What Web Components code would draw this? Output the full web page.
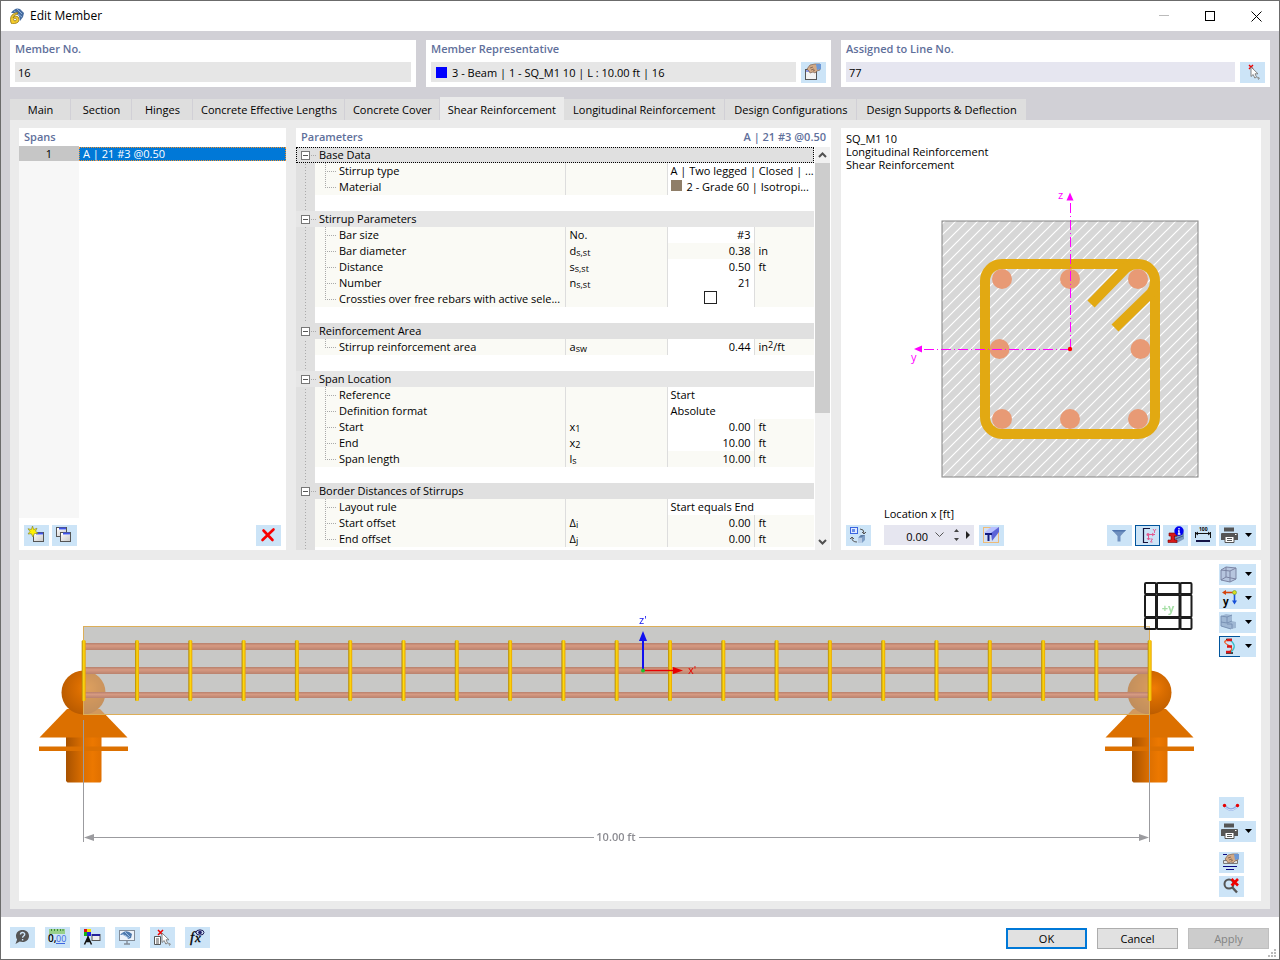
<!DOCTYPE html>
<html lang="en">
<head>
<meta charset="utf-8">
<title>Edit Member</title>
<style>
html, body { margin: 0; height: 100%; }
body { font: 11px/16px "Open Sans", "Noto Sans", sans-serif; color: #000; background: #fff; }
</style>
</head>
<body>
<rf-window></rf-window>
<script>
const BASE = `
:host { box-sizing: border-box; display: block; }
*, *::before, *::after { box-sizing: border-box; }
button, input { font: inherit; color: inherit; margin: 0; border-radius: 0; }
svg { display: block; }
`;

function define(name, render) {
  customElements.define(name, class extends HTMLElement {
    constructor() {
      super();
      this.attachShadow({ mode: 'open' });
    }
    connectedCallback() {
      this.shadowRoot.innerHTML = render(this);
    }
  });
}

/* ---------- icons, drawn on a 25 x 21 field ---------- */
const HAND = `<path d="M6 7l3-4 5-1 5 0v6l-3 1-2 2-2-1-3 1-1-2z" fill="#d3aa86" stroke="#7d6353" stroke-width=".7"/><path d="M9 6l3-1M10 8l3-1M12 9l2-1" stroke="#6d5548" stroke-width=".7"/><path d="M15 2l5 0v5l-4 1z" fill="#6c98d6"/>`;
const PRINTER = `<path d="M7 2.500h10v4H7z" fill="#555"/><path d="M5 8h15q1 0 1 1v6H4V9q0-1 1-1z" fill="#555"/><path d="M8 11.500h9v6H8z" fill="#fff" stroke="#555"/><path d="M10 13.500h5M10 15.500h5" stroke="#555"/><path d="M18 9.500h1.500" stroke="#fff"/>`;
const WIN = (x, y) => `<rect x="${x + .5}" y="${y + .5}" width="10" height="9" fill="url(#wg)" stroke="#555"/><path d="M${x + 1} ${y + 2}h9" stroke="#fff" stroke-width="2"/><path d="M${x + 3} ${y + 1.5}h7" stroke="#3f55e8" stroke-width="2"/>`;
const CURSOR = (x, y) => `<g transform="translate(${x} ${y})"><path d="M0 0v9.500l2.200-2 1.600 3.500 1.800-.8L4 6.800h3z" fill="#fff" stroke="#777" stroke-width=".9"/><path d="M6.500 10l2 1-1 1.500z" fill="#bbb" stroke="#777" stroke-width=".6"/></g>`;
const REDX = (x, y, s, w) => `<path d="M${x} ${y}l${s} ${s}m0-${s}l-${s} ${s}" stroke="#f00000" stroke-width="${w}" fill="none"/>`;
const ICONS = {
  pick: `<rect x="4.500" y="7.500" width="11" height="10" fill="#f2f2f2" stroke="#555"/><path d="M5 9h10" stroke="#6b7ae0" stroke-width="1.500"/>${HAND}`,
  select: `${REDX(9, 3, 4, 1.4)}${CURSOR(11, 5)}`,
  new: `${WIN(9, 7)}<path d="M8.500 1l1.200 3.600 3.300-1.400-1.500 3 2.500 2.200-3.600.2L9 12 7.300 8.700 4 9l2-2.600L4 3.700l3.400.8z" fill="#fff200" stroke="#8b8b30" stroke-width=".7"/>`,
  copy: `${WIN(4, 2)}${WIN(8, 7)}`,
  delete: `<path d="M7.500 5.500l9 9.500m1-10.500l-11 10.500" stroke="#f80000" stroke-width="2.600" stroke-linecap="round"/>`,
  swap: `<rect x="4.500" y="2.500" width="7" height="6" fill="#dfeaff" stroke="#3a66e0"/><path d="M6 4h3v3H6z" fill="#3a66e0" opacity=".7"/><path d="M14 4q4 0 4 4m-2-1l2 2 2-2M11 17q-5 0-5-4m-2 1l2-2 2 2" fill="none" stroke="#555"/><path d="M12 13l3-3h4v5l-3 3h-4z" fill="#7f9fc6"/><path d="M12 13h4v5h-4z" fill="#b9cde6"/><path d="M13 12l2-2h4l-3 2z" fill="#5f7fa8"/>`,
  tview: `<rect x="4.500" y="2.500" width="15" height="15" fill="#d5e0f2" stroke="#eebb77"/><path d="M5 8l7-6h8l-7 6z" fill="#b8c0ff"/><path d="M12 8l8-6v5l-7 9z" fill="#5b63d8"/><path d="M6 9h7M9.500 9v7" stroke="#111a80" stroke-width="2"/>`,
  filter: `<path d="M5 5h14l-5.500 6v5.500h-3V11z" fill="#6f90bf"/><path d="M5 5h14l-1.500 1.500h-11z" fill="#4f74ad"/>`,
  axes: `<path d="M15 3.500H8.500v14H13" fill="none" stroke="#14143c" stroke-width="1.200"/><path d="M13.500 15V9.500H20" stroke="#e2588f" fill="none"/><circle cx="13" cy="9.500" r="1.500" fill="#e2588f"/><path d="M18 4l1.500 2L21 4m-1.500 2v2M17 8l2 1.500-2 1.500M12 13l1.500 2 1.500-2M15.500 14h2l-2 3h2" fill="none" stroke="#e2588f" stroke-width=".9"/>`,
  info: `<path d="M11 8l8-2 2 2v6l-7 4-3-1z" fill="#7a97bd"/><path d="M10 12l10-3M10 15l10-4" stroke="#3f5c87"/><path d="M6 8h8v3h-2.500v4H14v2.500H5V15h3v-4H6z" fill="#d81818" stroke="#700" stroke-width=".6"/><circle cx="16" cy="6" r="4.700" fill="#0000f0"/><path d="M16 3v1.500M15 5.800h1v3.200m-1.200 0h2.600" stroke="#fff" stroke-width="1.300"/>`,
  dim: `<path d="M5 8.500h14M4.500 7v6M19.500 7v6M7 7l-2 1.500L7 10M17 7l2 1.500L17 10" fill="none" stroke="#111"/><path d="M5 16h14" stroke="#141446" stroke-width="2"/><text x="8" y="6" font-size="5" font-weight="700">100</text>`,
  print: PRINTER,
  cube: `<path d="M4 6l5-3 10 1v11l-6 3-9-2z" fill="#b6c5de"/><path d="M4 6l5-3 10 1v11l-6 3-9-2zM4 6l9 1v11M13 7l6-3M9 3v10l-5 3M9 13l10 2" fill="none" stroke="#7b84a3"/>`,
  yview: `<path d="M17 4.500H7" stroke="#d4430d" stroke-width="1.600"/><path d="M5 4.500L9 2v5z" fill="#d4430d"/><path d="M17.500 5v9" stroke="#1850d8" stroke-width="1.600"/><path d="M17.500 16.500L15 12.500h5z" fill="#1850d8"/><circle cx="17.500" cy="4.500" r="2" fill="#d9dc20" stroke="#69a030" stroke-width=".6"/><text x="6" y="17" font-size="10" font-weight="700">y</text>`,
  solids: `<path d="M4 4l5-2 6 1v6l4 1v6l-6 1-9-3z" fill="#9fb7d3"/><path d="M4 4l6 1v6l-6-1zM10 11l5-2M10 12h5v5M4 10v4l10 3M10 5l5-2" fill="none" stroke="#758db0" stroke-width=".9"/>`,
  results: `<path d="M9 3.500h6M9 17h7" stroke="#111" stroke-width="1.500"/><path d="M12 4q-8 1-1 5t1 7" fill="none" stroke="#f05a28" stroke-width="1.300"/><path d="M13 4q8 6 1 12" fill="none" stroke="#35bcc8" stroke-width="1.200"/><path d="M10 4h5M10 10.500h5M9 16h5" stroke="#d81818" stroke-width="2.400"/>`,
  deform: `<path d="M5 8q7 9 14 0" fill="none" stroke="#8ba8e4" stroke-width="2.600"/><path d="M6 10q6 6 12 0" fill="none" stroke="#d8e4f8"/><circle cx="5.500" cy="8.500" r="1.700" fill="#e80000"/><circle cx="18.500" cy="8.500" r="1.700" fill="#e80000"/>`,
  settings: `<path d="M4 2.500h4M16 2.500h3M4 14.500h14M7 17.500h8" stroke="#0a0a82"/><path d="M4.500 8.500h14v3h-14z" fill="#e2e2e2" stroke="#777"/>${HAND}`,
  zoomx: `<circle cx="10" cy="8" r="4.500" fill="none" stroke="#555" stroke-width="2"/><path d="M13 11l5 5.500" stroke="#555" stroke-width="2.400"/>${REDX(12.500, 3, 6.5, 2.6)}`,
  help: `<path d="M12.500 3c4 0 6.500 2.600 6.500 6s-2.600 6-6.500 6c-1 0-2-.2-2.800-.5L5.500 17l1.600-4.500C6.400 11.500 6 10.400 6 9c0-3.400 2.500-6 6.500-6z" fill="#555"/><path d="M10.500 7.500c0-2.600 4.200-2.500 4.200-.2 0 1.700-2.100 1.600-2.100 3.400M12.600 12v1.400" fill="none" stroke="#cce4f7" stroke-width="1.400"/>`,
  units: `<path d="M4 2h16v5H4z" fill="#98d08b"/><path d="M6.500 2v2M9.500 2v2M12.500 2v2M15.500 2v2M18 2v2" stroke="#3e8c38"/><text x="3" y="15" font-size="10" font-weight="600">0,</text><text x="11" y="15" font-size="9" fill="#3a66e0">00</text><path d="M11 16.500h9" stroke="#3a66e0"/>`,
  colors: `<path d="M4 2h3v3H4z" fill="#e01010"/><path d="M7 2h4v3H7z" fill="#f2e200"/><path d="M4 5h3v4H4z" fill="#17b517"/><path d="M7 5h4v4H7z" fill="#2020e0"/><path d="M4.500 17.500L8 10l3.500 7.500M6 14.500h4M8 9v5" fill="none" stroke="#111" stroke-width="1.500"/><rect x="12" y="7.500" width="8" height="6" fill="#eee" stroke="#555"/><path d="M12 8h8" stroke="#23239a" stroke-width="2"/>`,
  display: `<rect x="4.500" y="3.500" width="15" height="10" fill="#edf3fa" stroke="#828c98"/><path d="M5 8q6-7 12-1l-1 4-3 1q-1-5-8-4z" fill="#4d79ad"/><path d="M7 7l7 4M10 5l5 5" stroke="#9bbbe0"/><path d="M12 14v3M9 17h6" stroke="#828c98" stroke-width="1.400"/>`,
  formulas: `<text x="5" y="15" font-size="15" font-style="italic" font-family="Liberation Serif, serif" stroke="#000" stroke-width=".3">f</text><text x="10" y="15" font-size="13" font-style="italic" font-family="Liberation Serif, serif" stroke="#000" stroke-width=".3">x</text><ellipse cx="15" cy="5.500" rx="4" ry="2.600" fill="#c9d8f0" stroke="#20205a"/><circle cx="15" cy="5.500" r="1.800" fill="#20206a"/>`,
  pickdoc: `<path d="M4.500 9.500h6v8h-6z" fill="#fff" stroke="#555"/><path d="M6 12h3M6 14h3M6 16h3" stroke="#555"/>${REDX(8, 3, 5, 1.5)}${CURSOR(12, 6)}`
};

define('rf-tool', el => `<style>${BASE}
:host { flex: none; }
button { display: flex; align-items: center; width: 25px; height: 21px; padding: 0; border: 0; background: #cce4f7; }
button.menu { width: 37px; }
:host([active]) button:not(.menu) { box-shadow: inset 0 0 0 1px #00549c; }
:host([active]) button.menu { background: linear-gradient(#00549c, #00549c) 0 0 / 21px 1px no-repeat, linear-gradient(#00549c, #00549c) 0 100% / 21px 1px no-repeat, linear-gradient(#00549c, #00549c) 0 0 / 1px 100% no-repeat, #cce4f7; }
svg { flex: none; font-family: "Open Sans", sans-serif; }
svg.caret { margin-left: 2px; }
.menu .glyph { margin-left: -2px; }
</style>
<button type="button" aria-label="${el.getAttribute('label')}"${el.hasAttribute('menu') ? ' class="menu"' : ''}>
<svg class="glyph" width="25" height="21" viewBox="0 0 25 21"><defs><linearGradient id="wg" x2="1" y2="1"><stop stop-color="#fff"/><stop offset="1" stop-color="#c8c8c8"/></linearGradient></defs>${ICONS[el.getAttribute('icon')]}</svg>
${el.hasAttribute('menu') ? '<svg class="caret" width="9" height="5" viewBox="0 0 9 5"><path d="M1 0h7L4.500 4z"/></svg>' : ''}
</button>`);

/* ---------- title bar ---------- */
define('rf-titlebar', () => `<style>${BASE}
:host { display: flex; align-items: center; height: 30px; padding-left: 8px; background: #fff; font-size: 12px; }
h1 { margin: 0; padding-left: 5px; flex: 1; font: inherit; }
button { width: 46px; height: 30px; padding: 0; border: 0; background: none; display: grid; place-items: center; }
</style>
<svg width="16" height="16" viewBox="0 0 16 16"><path d="M2 5q4-6 9-4l4 4-1 4-3 4-1-5-4-3z" fill="#456b9f"/><path d="M5 3l8 6M8 1l5 5" stroke="#8eb0da"/><path d="M8.500 4.500q-7 1-7 7t4 4q4.500-.5 4.500-4T6.500 8Q5 8 4 10q1-4 4.500-4z" fill="#f4cb2c" stroke="#927414" stroke-width=".8"/><circle cx="6" cy="11.500" r="1.400" fill="#fff" stroke="#927414" stroke-width=".8"/></svg>
<h1>Edit Member</h1>
<button aria-label="Minimize"><svg width="10" height="10"><path d="M0 4.500h10" stroke="#bbb"/></svg></button>
<button aria-label="Maximize"><svg width="11" height="11"><rect x=".5" y=".5" width="9" height="9" fill="none" stroke="#000"/></svg></button>
<button aria-label="Close"><svg width="11" height="11"><path d="M.5.500l10 10m0-10l-10 10" stroke="#000"/></svg></button>`);

/* ---------- labelled read-only field ---------- */
define('rf-field', el => `<style>${BASE}
:host { background: #fff; padding: 1px 5px 4px; height: 47px; min-width: 0; }
label { display: block; height: 21px; line-height: 16px; font-weight: 600; color: #5f709b; }
.row { display: flex; gap: 5px; align-items: start; }
.box { flex: 1; min-width: 0; display: flex; align-items: center; height: 20px; padding: 0 3px; background: ${el.getAttribute('tint') || '#e6e6e6'}; }
.swatch { width: 11px; height: 11px; margin: 0 5px 0 2px; background: #00f; }
input { flex: 1; min-width: 0; height: 20px; padding: 0; border: 0; background: none; outline: 0; }
</style>
<label for="v">${el.getAttribute('label')}</label>
<div class="row"><div class="box">${el.hasAttribute('swatch') ? '<span class="swatch"></span>' : ''}<input id="v" readonly value="${el.getAttribute('value')}"></div><slot></slot></div>`);

/* ---------- tab strip ---------- */
const TABS = ['Main', 'Section', 'Hinges', 'Concrete Effective Lengths', 'Concrete Cover', 'Shear Reinforcement', 'Longitudinal Reinforcement', 'Design Configurations', 'Design Supports &amp; Deflection'];
define('rf-tabs', () => `<style>${BASE}
:host { display: flex; align-items: end; height: 23px; }
button { min-width: 61px; height: 21px; padding: 1px 7px 0 8px; border: 0; border-right: 1px solid #d1d0d6; background: #dedede; white-space: nowrap; }
button:nth-child(n+8) { padding: 1px 9px 0; }
button[aria-selected=true] { height: 23px; padding: 3px 8px 0; border: 0; background: #ebebeb; }
</style>${TABS.map((t, i) => `<button role="tab" aria-selected="${i === 5}">${t}</button>`).join('')}`);

/* ---------- spans list ---------- */
define('rf-spans', () => `<style>${BASE}
:host { display: flex; flex-direction: column; background: #fff; min-width: 0; }
h2 { margin: 0; padding: 1px 5px; height: 18px; font: inherit; font-weight: 600; color: #5f709b; }
.list { flex: 1; background: linear-gradient(#f7f7f7, #f7f7f7) 0 0 / 60px 100% no-repeat; }
table { width: 100%; border-collapse: collapse; table-layout: fixed; }
th { width: 60px; height: 15px; padding: 0; background: #c6c6c6; font-weight: 400; line-height: 15px; }
td { padding: 1px 0 0; line-height: 14px; }
td div { height: 14px; padding-left: 4px; background: #0078d7; color: #fff; outline: 1px dotted #f0902a; outline-offset: -1px; line-height: 14px; }
footer { display: flex; gap: 3px; padding: 7px 5px 4px; }
.gap { flex: 1; }
</style>
<h2>Spans</h2>
<div class="list"><table><tr><th scope="row">1</th><td><div>A | 21 #3 @0.50</div></td></tr></table></div>
<footer><rf-tool icon="new" label="New"></rf-tool><rf-tool icon="copy" label="Copy"></rf-tool><span class="gap"></span><rf-tool icon="delete" label="Delete"></rf-tool></footer>`);

/* ---------- parameter grid ---------- */
const GROUPS = [
  ['Base Data', [
    ['Stirrup type', '', { wide: 'A | Two legged | Closed | ...' }],
    ['Material', '', { wide: '<i class="swatch"></i>2 - Grade 60 | Isotropi...' }]]],
  ['Stirrup Parameters', [
    ['Bar size', 'No.', { v: '#3', u: '' }],
    ['Bar diameter', 'd<sub>s,st</sub>', { v: '0.38', u: 'in', ro: 1 }],
    ['Distance', 's<sub>s,st</sub>', { v: '0.50', u: 'ft' }],
    ['Number', 'n<sub>s,st</sub>', { v: '21', u: '' }],
    ['Crossties over free rebars with active sele...', '', { check: 1, u: '' }]]],
  ['Reinforcement Area', [
    ['Stirrup reinforcement area', 'a<sub>sw</sub>', { v: '0.44', u: 'in<sup>2</sup>/ft' }]]],
  ['Span Location', [
    ['Reference', '', { wide: 'Start' }],
    ['Definition format', '', { wide: 'Absolute' }],
    ['Start', 'x<sub>1</sub>', { v: '0.00', u: 'ft' }],
    ['End', 'x<sub>2</sub>', { v: '10.00', u: 'ft' }],
    ['Span length', 'l<sub>s</sub>', { v: '10.00', u: 'ft', ro: 1 }]]],
  ['Border Distances of Stirrups', [
    ['Layout rule', '', { wide: 'Start equals End' }],
    ['Start offset', 'Δ<sub>i</sub>', { v: '0.00', u: 'ft', ro: 1 }],
    ['End offset', 'Δ<sub>j</sub>', { v: '0.00', u: 'ft', ro: 1 }]]]
];
function valueCells(c) {
  if (c.wide) return `<td class="wide" colspan="2">${c.wide}</td>`;
  const inner = c.check ? '<input type="checkbox" aria-label="Crossties over free rebars">' : c.v;
  return `<td class="${c.ro ? 'val ro' : 'val'}${c.check ? ' check' : ''}">${inner}</td><td class="unit">${c.u}</td>`;
}
define('rf-params', () => `<style>${BASE}
:host { display: flex; flex-direction: column; background: #fff; min-width: 0; }
header { display: flex; justify-content: space-between; height: 19px; padding: 1px 5px; font-weight: 600; color: #5f709b; }
h2 { margin: 0; font: inherit; }
.body { flex: 1; display: flex; overflow: hidden; background: linear-gradient(#e0e0e0, #e0e0e0) 0 0 / 19px 100% no-repeat; }
.grid { flex: 1; min-width: 0; position: relative; background: repeating-linear-gradient(#aaa 0 1px, transparent 1px 3px) 9px 8px / 1px 100% no-repeat; }
table { width: 100%; border-collapse: collapse; table-layout: fixed; }
td, th { height: 16px; padding: 0; line-height: 16px; white-space: nowrap; overflow: hidden; font-weight: 400; text-align: left; background: #fafaf5; }
td.gut { background: none; padding-left: 5px; overflow: visible; }
tr.group th, tr.group .gut { background: #e0e0e0; }
tr.group.alt th, tr.group.alt .gut { background: #e6e6e6; }
tr.group th { padding-left: 4px; }
tr.first { outline: 1px dotted #000; outline-offset: -1px; }
.gut button { position: relative; display: block; width: 9px; height: 9px; padding: 0; border: 1px solid #777; background: linear-gradient(#555, #555) 50% 50% / 5px 1px no-repeat #fff; }
.gut button::after { content: ""; position: absolute; left: 9px; top: 3px; width: 5px; height: 1px; background: repeating-linear-gradient(90deg, #aaa 0 1px, transparent 1px 2px); }
tr.space td { background: #fff; }
tr.space td.gut { background: none; }
th.name { padding-left: 24px; border-right: 1px solid #ddd; background:
  repeating-linear-gradient(90deg, #aaa 0 1px, transparent 1px 2px) 10px 8px / 12px 1px no-repeat,
  repeating-linear-gradient(#aaa 0 1px, transparent 1px 2px) 10px 0 / 1px 16px no-repeat, #fafaf5; }
tr.last th.name { background-size: 12px 1px, 1px 8px, auto; }
td.sym { padding-left: 4px; border-right: 1px solid #ddd; }
td.wide { padding-left: 3px; background: #fff; }
td.val { padding-right: 3px; border-right: 1px solid #ddd; background: #fff; text-align: right; }
td.val.ro { background: #fafaf5; }
td.val.check { padding: 0; vertical-align: top; }
td.unit { padding-left: 4px; }
input { appearance: none; display: block; width: 13px; height: 13px; margin: 0 auto; border: 1px solid #222; background: #fff; }
sub, sup { font-size: 9px; line-height: 0; vertical-align: -1px; }
sup { vertical-align: 3px; }
.swatch { display: inline-block; width: 11px; height: 11px; margin-right: 5px; background: #8f7e68; }
.scroll { display: flex; flex-direction: column; width: 15px; margin: 0 1px; background: #f0f0f0; }
.scroll button { flex: none; height: 16px; width: 15px; padding: 0; border: 0; background: none; display: grid; place-items: center; }
.thumb { height: 250px; background: #cdcdcd; }
.rest { flex: 1; }
</style>
<header><h2>Parameters</h2><span>A | 21 #3 @0.50</span></header>
<div class="body"><div class="grid"><table>
<colgroup><col style="width:19px"><col><col style="width:102px"><col style="width:87px"><col style="width:60px"></colgroup>
${GROUPS.map(([g, rows], gi) => `
<tr class="group${gi % 2 ? ' alt' : ''}${gi ? '' : ' first'}"><td class="gut"><button type="button" aria-label="Collapse ${g}"></button></td><th colspan="4">${g}</th></tr>
${rows.map(([n, s, c], i) => `<tr${i === rows.length - 1 ? ' class="last"' : ''}><td class="gut"></td><th class="name" scope="row">${n}</th><td class="sym">${s}</td>${valueCells(c)}</tr>`).join('')}
${gi < GROUPS.length - 1 ? '<tr class="space"><td class="gut"></td><td colspan="4"></td></tr>' : ''}`).join('')}
</table></div>
<div class="scroll"><button type="button" aria-label="Scroll up"><svg width="9" height="6"><path d="M1 5l3.500-3.500L8 5" fill="none" stroke="#505050" stroke-width="2"/></svg></button><div class="thumb"></div><div class="rest"></div><button type="button" aria-label="Scroll down"><svg width="9" height="6"><path d="M1 1l3.500 3.500L8 1" fill="none" stroke="#505050" stroke-width="2"/></svg></button></div>
</div>`);

/* ---------- cross-section preview ---------- */
const BARS = [[1002, 279], [1070, 279], [1138, 279], [999.5, 349], [1140.5, 349], [1002, 419], [1070, 419], [1138, 419]];
define('rf-section', () => `<style>${BASE}
:host { display: flex; flex-direction: column; background: #fff; min-width: 0; padding: 4px 5px; }
p { margin: 0; line-height: 13px; }
.drawing { flex: 1; width: 100%; min-height: 0; margin-top: 9px; }
footer { display: flex; align-items: end; gap: 3px; }
.loc { display: flex; flex-direction: column; gap: 4px; width: 90px; margin: 0 2px 0 10px; }
.loc label { line-height: 14px; white-space: nowrap; }
.spin { display: flex; align-items: center; height: 20px; margin-bottom: 1px; background: #e6e6f0; }
.spin input { width: 44px; height: 20px; padding: 2px 0 0; border: 0; background: none; text-align: right; outline: 0; }
.spin button { padding: 0; border: 0; background: none; display: grid; place-items: center; height: 20px; }
.gap { flex: 1; }
</style>
<p>SQ_M1 10</p><p>Longitudinal Reinforcement</p><p>Shear Reinforcement</p>
<svg class="drawing" viewBox="846 180 410 327">
<defs><pattern id="h" width="11" height="11" patternUnits="userSpaceOnUse"><path d="M-1 12L12-1M-1 1L1-1M10 12l2-2" stroke="#fff" stroke-width="1.200"/></pattern>
<g id="bars">${BARS.map(([x, y]) => `<circle cx="${x}" cy="${y}" r="10"/>`).join('')}</g></defs>
<rect x="942" y="221" width="256" height="256" fill="#d7d7d7"/>
<rect x="942" y="221" width="256" height="256" fill="url(#h)" stroke="#848484"/>
<use href="#bars" fill="#e89a75"/>
<g fill="none" stroke="#e2a912" stroke-width="10">
<rect x="985" y="264" width="170" height="170" rx="17"/>
<path d="M1091 304l35-36q5-4 12-4M1115 328l36-35q4-5 4-12"/></g>
<g stroke="#f0f" fill="none" stroke-dasharray="10 3 1 3"><path d="M1070.500 349V200"/><path d="M1070 349.500H921"/></g>
<path d="M1070 192.500l3.500 8h-7zM914 349l8-3.500v7z" fill="#f0f"/>
<circle cx="1070" cy="349" r="2.200" fill="#f00"/>
<g fill="#f0f" font-size="11"><text x="1058" y="199">z</text><text x="911" y="361">y</text></g>
</svg>
<footer>
<rf-tool icon="swap" label="Swap view"></rf-tool>
<div class="loc"><label for="x">Location x [ft]</label><div class="spin"><input id="x" value="0.00">
<button type="button" aria-label="Values" style="width:22px"><svg width="9" height="6"><path d="M.5.500l4 4 4-4" fill="none" stroke="#555"/></svg></button>
<button type="button" aria-label="Step" style="width:12px"><svg width="5" height="12"><path d="M0 3l2.500-3L5 3zM0 9l2.500 3L5 9z" fill="#444"/></svg></button>
<button type="button" aria-label="Next" style="width:12px"><svg width="4" height="8"><path d="M0 0l4 4-4 4z" fill="#222"/></svg></button></div></div>
<rf-tool icon="tview" label="Section view"></rf-tool><span class="gap"></span>
<rf-tool icon="filter" label="Filter"></rf-tool><rf-tool icon="axes" label="Axes" active></rf-tool><rf-tool icon="info" label="Section info"></rf-tool><rf-tool icon="dim" label="Dimensions"></rf-tool><rf-tool icon="print" label="Print" menu></rf-tool>
</footer>`);

/* ---------- 3D scene ---------- */
const STIRRUPS = Array.from({ length: 21 }, (_, i) => 83.7 + i * 53.3);
const NAV = [[1145, 11], [1157, 22.5], [1180.5, 11]].flatMap(([x, w]) => [[583, 11], [595, 22], [618, 11]].map(([y, h]) => `<rect x="${x}" y="${y}" width="${w}" height="${h}" rx="1"/>`)).join('');
define('rf-scene', () => `<style>${BASE}
:host { display: flex; background: #fff; min-height: 0; padding-right: 5px; }
.view { flex: 1; min-width: 0; width: 100%; height: 100%; }
aside { display: flex; flex-direction: column; gap: 3px; width: 43px; padding: 4px 0 4px 6px; }
.gap { flex: 1; }
.split { height: 4px; }
</style>
<svg class="view" viewBox="19 560 1194 341">
<defs>
<linearGradient id="col"><stop stop-color="#a85200"/><stop offset=".5" stop-color="#de7000"/><stop offset=".75" stop-color="#ec7800"/><stop offset="1" stop-color="#e07000"/></linearGradient>
<radialGradient id="ball" cx=".6" cy=".4" r=".65"><stop stop-color="#f07c04"/><stop offset=".4" stop-color="#d86c00"/><stop offset="1" stop-color="#b85a00"/></radialGradient>
<linearGradient id="bar" x2="0" y2="1"><stop stop-color="#b8806c"/><stop offset=".4" stop-color="#d69a82"/><stop offset="1" stop-color="#ba826e"/></linearGradient>
<linearGradient id="st"><stop stop-color="#b08408"/><stop offset=".5" stop-color="#ffdc10"/><stop offset="1" stop-color="#e8a000"/></linearGradient>
<clipPath id="inside"><rect x="84" y="627" width="1065" height="87"/></clipPath>
<g id="support"><path d="M66 737h35.500v44l-1 1.500h-33l-1.500-1.500z" fill="url(#col)"/><path d="M67 709L39.500 737.500h88L100 709z" fill="#dc7000"/><path d="M39 746.500h89v4.500H39z" fill="#dc7000"/><circle cx="83.500" cy="692.500" r="22" fill="url(#ball)"/></g>
</defs>
<use href="#support"/><use href="#support" x="1066"/>
<rect x="83.500" y="626.500" width="1066" height="88" fill="#c8c8c6"/>
<g clip-path="url(#inside)" opacity=".53"><use href="#support"/><use href="#support" x="1066"/></g>
<rect x="83.500" y="626.500" width="1066" height="88" fill="none" stroke="#dcae58"/>
<g fill="url(#bar)"><rect x="84" y="643" width="1065" height="7"/><rect x="84" y="667" width="1065" height="7"/><rect x="84" y="692" width="1065" height="6"/></g>
<g fill="url(#st)">${STIRRUPS.map(x => `<rect x="${(x - 2).toFixed(1)}" y="640" width="4" height="61" rx="1.500"/>`).join('')}</g>
<g stroke="#9b9b9f" fill="none"><path d="M83.500 720v122M1149.500 715v127M92 837.500h502M639 837.500h502"/></g>
<path d="M84 837.500l10-3.500v7zM1149 837.500l-10-3.500v7z" fill="#9b9b9f"/>
<text x="616" y="841" text-anchor="middle" font-size="11" font-weight="600" fill="#8c8c92">10.00 ft</text>
<path d="M643 670v-30" stroke="#1010f0" stroke-width="2"/><path d="M643 631l4 10h-8z" fill="#1010f0"/>
<path d="M644 670.500h32" stroke="#e80000" stroke-width="1.400"/><path d="M683 670.500l-10-3.500v7z" fill="#e80000"/>
<circle cx="643" cy="670.500" r="2" fill="#20c030"/>
<g font-size="11"><text x="639" y="624" fill="#1010f0">z'</text><text x="688" y="674" fill="#e80000">x'</text></g>
<g fill="#fff" fill-opacity=".3" stroke="#1c1c1c" stroke-width="2">${NAV}</g>
<text x="1168" y="612" text-anchor="middle" font-size="11" font-weight="700" fill="#a5dfa5">+y</text>
</svg>
<aside>
<rf-tool icon="cube" label="View" menu></rf-tool><rf-tool icon="yview" label="View direction" menu></rf-tool><rf-tool icon="solids" label="Display mode" menu></rf-tool><rf-tool icon="results" label="Results" menu active></rf-tool>
<span class="gap"></span>
<rf-tool icon="deform" label="Deformation"></rf-tool><rf-tool icon="print" label="Print" menu></rf-tool><span class="split"></span><rf-tool icon="settings" label="Settings"></rf-tool><rf-tool icon="zoomx" label="Reset zoom"></rf-tool>
</aside>`);

/* ---------- dialog footer ---------- */
define('rf-actions', () => `<style>${BASE}
:host { display: flex; gap: 10px; align-items: start; height: 42px; padding: 10px 10px 0 9px; background: #fff; position: relative; }
.gap { flex: 1; }
.cmd { width: 81px; height: 21px; margin-top: 1px; padding: 1px 0 0; border: 1px solid #adadad; background: #e1e1e1; line-height: 16px; }
.cmd.ok { border: 2px solid #0078d7; padding: 0; }
.cmd:disabled { border-color: #bfbfbf; background: #ccc; color: #838383; }
.grip { position: absolute; right: 3px; bottom: 2px; }
</style>
<rf-tool icon="help" label="Help"></rf-tool><rf-tool icon="units" label="Units"></rf-tool><rf-tool icon="colors" label="Display properties"></rf-tool><rf-tool icon="display" label="Display"></rf-tool><rf-tool icon="pickdoc" label="Pick"></rf-tool><rf-tool icon="formulas" label="Formulas"></rf-tool>
<span class="gap"></span>
<button class="cmd ok" type="button">OK</button><button class="cmd" type="button">Cancel</button><button class="cmd" type="button" disabled>Apply</button>
<svg class="grip" width="8" height="8"><path d="M6 0h2v2H6zM3 3h2v2H3zM6 3h2v2H6zM0 6h2v2H0zM3 6h2v2H3zM6 6h2v2H6z" fill="#bbb"/></svg>`);

define('rf-window', () => `<style>${BASE}
:host { display: flex; flex-direction: column; min-height: 100vh; border: 1px solid #6b6b6b; background: #d1d0d6; }
main { flex: 1; display: flex; flex-direction: column; padding: 9px 9px 8px; }
.fields { display: grid; grid-template-columns: 406fr 405fr 429fr; gap: 10px; margin-bottom: 10px; }
.page { flex: 1; display: flex; flex-direction: column; gap: 10px; padding: 8px 9px; background: #ebebeb; }
.top { display: grid; grid-template-columns: 267fr 535fr 420fr; gap: 10px; min-height: 422px; }
rf-scene { flex: 1; }
</style>
<rf-titlebar></rf-titlebar>
<main>
<div class="fields">
<rf-field label="Member No." value="16"></rf-field>
<rf-field label="Member Representative" value="3 - Beam | 1 - SQ_M1 10 | L : 10.00 ft | 16" swatch><rf-tool icon="pick" label="Edit representative"></rf-tool></rf-field>
<rf-field label="Assigned to Line No." value="77" tint="#e6e6f0"><rf-tool icon="select" label="Select line"></rf-tool></rf-field>
</div>
<rf-tabs></rf-tabs>
<div class="page">
<div class="top"><rf-spans></rf-spans><rf-params></rf-params><rf-section></rf-section></div>
<rf-scene></rf-scene>
</div>
</main>
<rf-actions></rf-actions>`);
</script>
</body>
</html>
